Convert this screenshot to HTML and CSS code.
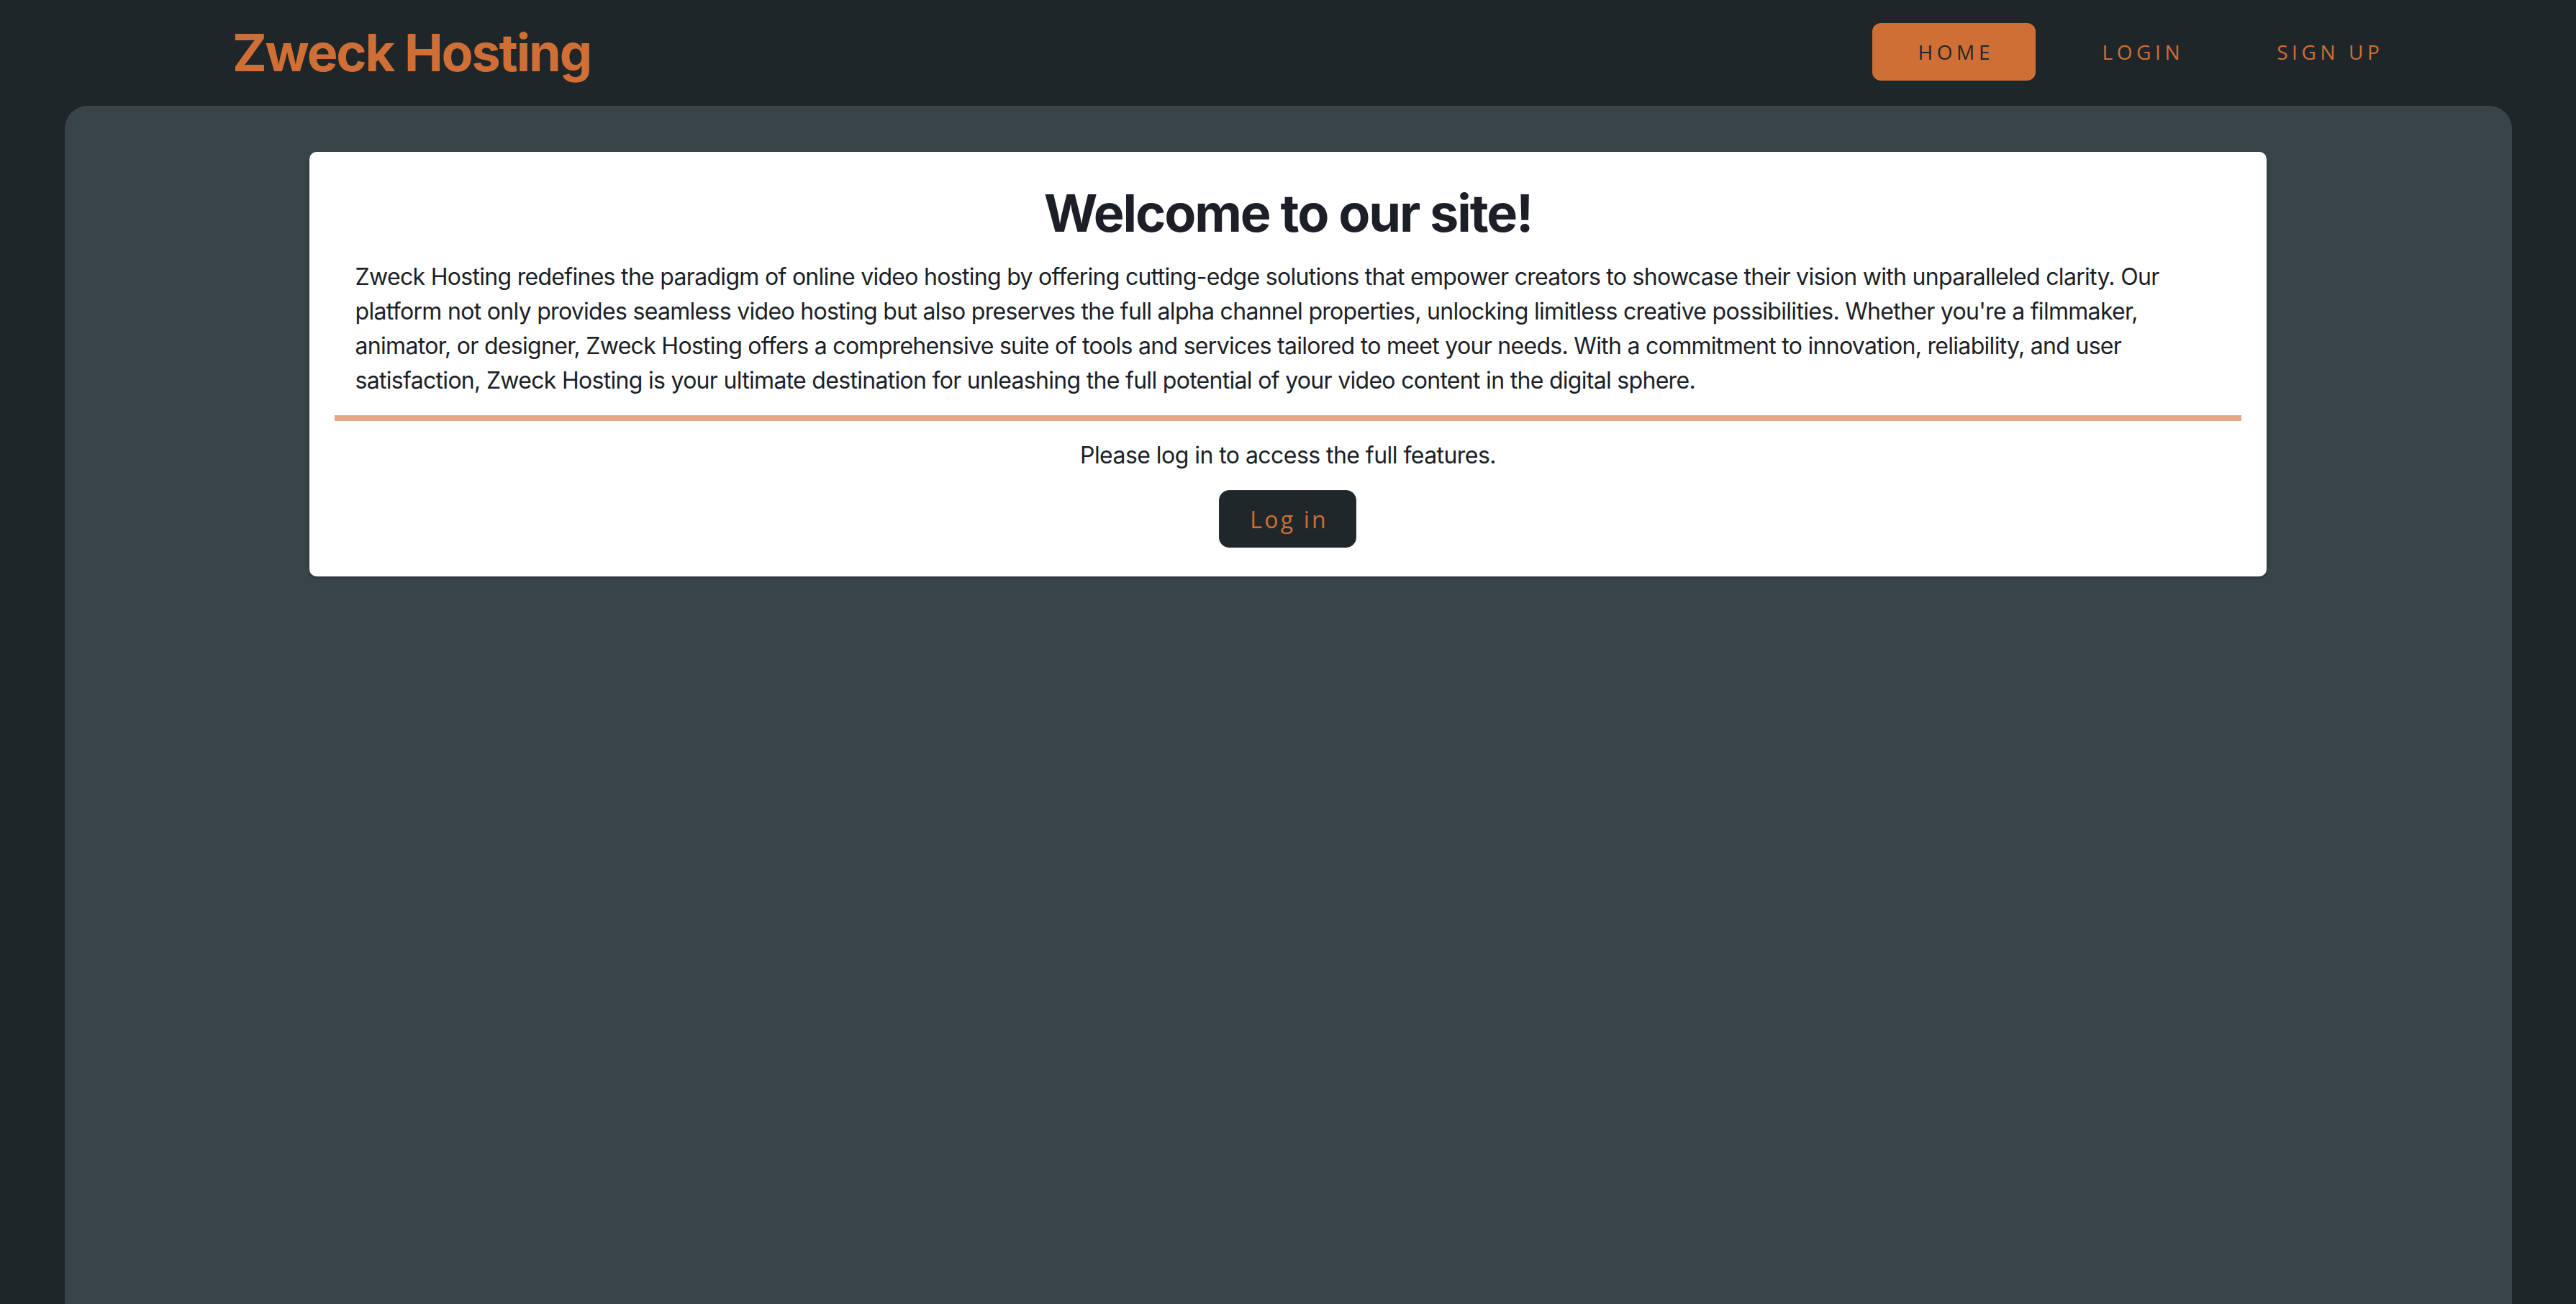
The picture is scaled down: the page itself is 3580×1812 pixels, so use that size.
FILE: index.html
```html
<!DOCTYPE html>
<html lang="en">
<head>
<meta charset="utf-8">
<title>Zweck Hosting</title>
<link rel="stylesheet" href="styles.css">
</head>
<body>
<header class="topbar">
  <div class="brand">Zweck Hosting</div>
  <nav class="menu">
    <a class="menu-link active" href="#">Home</a>
    <a class="menu-link" href="#">Login</a>
    <a class="menu-link" href="#">Sign up</a>
  </nav>
</header>
<main class="panel">
  <section class="card">
    <h1 class="card-title">Welcome to our site!</h1>
    <p class="intro">Zweck Hosting redefines the paradigm of online video hosting by offering cutting-edge solutions that empower creators to showcase their vision with unparalleled clarity. Our platform not only provides seamless video hosting but also preserves the full alpha channel properties, unlocking limitless creative possibilities. Whether you're a filmmaker, animator, or designer, Zweck Hosting offers a comprehensive suite of tools and services tailored to meet your needs. With a commitment to innovation, reliability, and user satisfaction, Zweck Hosting is your ultimate destination for unleashing the full potential of your video content in the digital sphere.</p>
    <hr class="divider">
    <p class="notice">Please log in to access the full features.</p>
    <button class="login-btn" type="button">Log in</button>
  </section>
</main>
</body>
</html>
```
FILE: styles.css
```css
html, body {
  margin: 0;
  padding: 0;
}
body {
  background: #1f2629;
  font-family: Inter, "Liberation Sans", sans-serif;
  color: #1c1f27;
  min-height: 100vh;
}
.topbar {
  display: flex;
  align-items: center;
  justify-content: space-between;
  height: 144px;
  padding: 0 231px 0 323px;
}
.brand {
  font-family: Inter, "Liberation Sans", sans-serif;
  font-weight: 700;
  font-size: 72px;
  color: #cf6f35;
  letter-spacing: -2.2px;
  line-height: 1;
  padding-top: 2px;
}
.menu {
  display: flex;
  gap: 33px;
}
.menu-link {
  width: 227px;
  height: 80px;
  display: flex;
  align-items: center;
  justify-content: center;
  border-radius: 12px;
  font-family: "Open Sans", "Liberation Sans", sans-serif;
  font-size: 28px;
  letter-spacing: 0.2em;
  text-indent: 0.2em;
  text-transform: uppercase;
  text-decoration: none;
  color: #cf6f35;
}
.menu-link.active {
  background: #cf6f35;
  color: #20262a;
}
.panel {
  margin: 3px 2.5% 0;
  background: #394449;
  border-radius: 32px 32px 0 0;
  min-height: calc(100vh - 147px);
  padding-top: 64px;
  box-sizing: border-box;
}
.card {
  width: 80%;
  margin: 0 auto;
  background: #ffffff;
  border-radius: 10px;
  padding: 41px 35px 40px;
  box-sizing: border-box;
  box-shadow: 0 2px 4px rgba(0, 0, 0, 0.25);
  text-align: center;
}
.card-title {
  margin: 0;
  font-size: 72px;
  font-weight: 700;
  line-height: 87px;
  letter-spacing: -2.1px;
  color: #1c1f27;
}
.intro {
  margin: 22px 29px 0;
  font-size: 32px;
  line-height: 48px;
  text-align: left;
  letter-spacing: -0.7px;
}
.divider {
  border: 0;
  height: 8px;
  background: #e3a985;
  margin: 24px 0;
}
.notice {
  margin: 0;
  font-size: 32px;
  line-height: 48px;
  letter-spacing: -0.55px;
}
.login-btn {
  display: block;
  margin: 24px auto 0;
  width: 191px;
  height: 80px;
  background: #20272a;
  border: 1px solid #2c3438;
  border-radius: 14px;
  color: #cf6f35;
  font-family: "Open Sans", "Liberation Sans", sans-serif;
  font-size: 32px;
  letter-spacing: 0.1em;
  text-indent: 0.1em;
  cursor: pointer;
}
```
